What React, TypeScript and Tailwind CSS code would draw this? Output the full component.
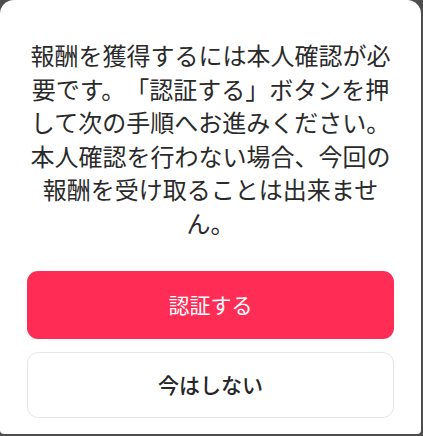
export default function App() {
  return (
    <div className="w-[423px] h-[436px] bg-[#4d4d4d] overflow-hidden">
      <div
        className="w-[421px] h-[434px] bg-white rounded-t-[14px] rounded-b-[4px] px-[27px] pt-[38px] flex flex-col"
        style={{ fontFamily: '"Noto Sans CJK JP", "Noto Sans", sans-serif' }}
      >
        <p className="text-[24px] leading-[1.4] text-[#2a2a2a] text-center [text-spacing-trim:space-all]">
          報酬を獲得するには本人確認が必要です。「認証する」ボタンを押して次の手順へお進みください。本人確認を行わない場合、今回の報酬を受け取ることは出来ません。
        </p>
        <button className="mt-[31px] h-[68px] w-full rounded-[11px] bg-[#ff2d55] text-white text-[21px]">
          認証する
        </button>
        <button className="mt-[13px] h-[66px] w-full rounded-[11px] border border-[#e6e6e6] bg-white text-[#262626] text-[21px] font-medium">
          今はしない
        </button>
      </div>
    </div>
  );
}
